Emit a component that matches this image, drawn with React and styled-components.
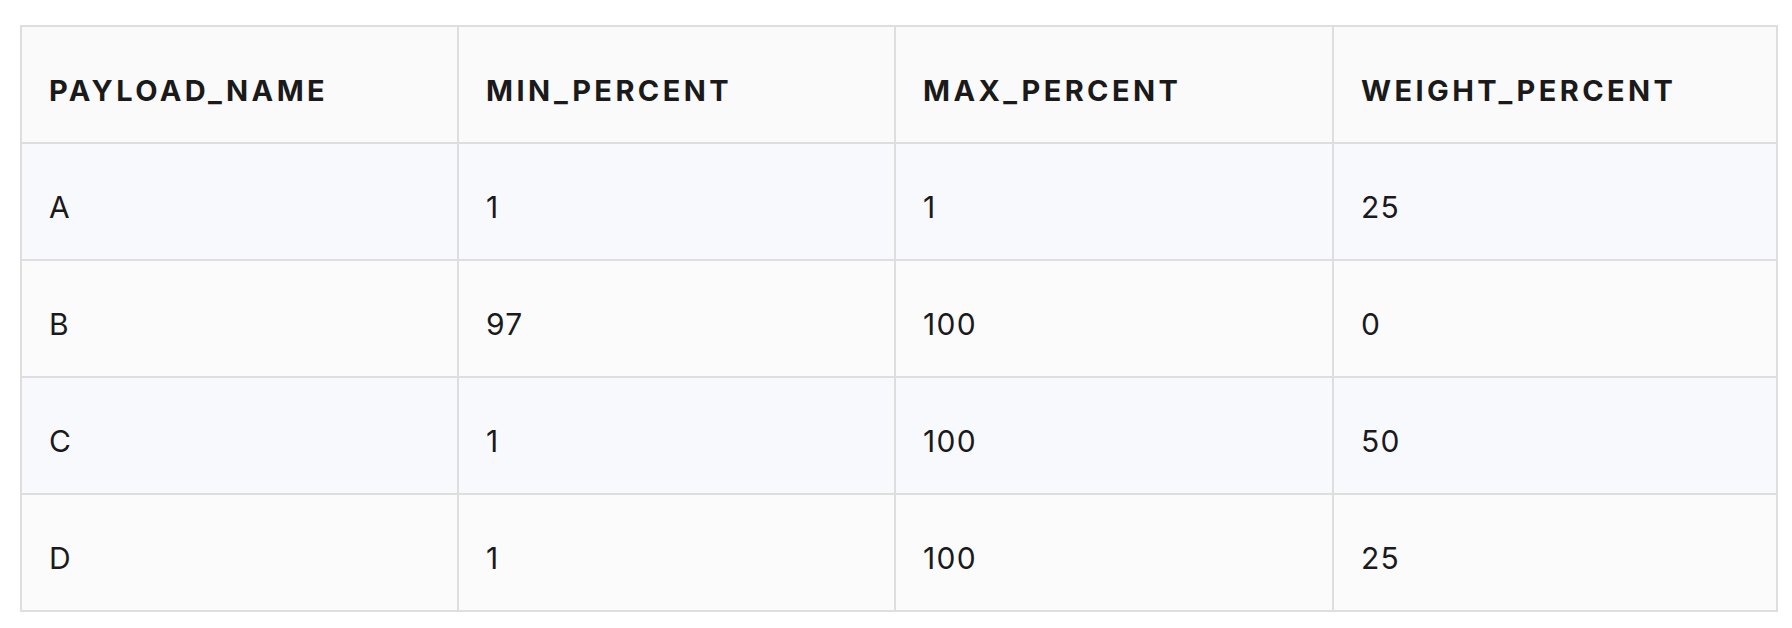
import React from "react";
import styled, { createGlobalStyle } from "styled-components";

const GlobalStyle = createGlobalStyle`
  html, body {
    margin: 0;
    background: #ffffff;
    font-family: Inter, "Noto Sans", sans-serif;
    color: #1c1c1e;
  }
`;

const Wrapper = styled.div`
  padding: 25px 0 0 20px;
`;

const Table = styled.table`
  width: 1756px;
  table-layout: fixed;
  border-collapse: collapse;
  border: 2px solid #dedede;
`;

const HeadCell = styled.th`
  text-align: left;
  background: #fafafa;
  border: 2px solid #dedede;
  padding: 46px 20px 33px 27px;
  font-size: 29px;
  line-height: 36px;
  font-weight: 700;
  letter-spacing: 3.4px;
  color: #1a1a1a;
`;

const Row = styled.tr`
  background: ${({ $striped }) => ($striped ? "#f8f9fc" : "#fbfbfb")};
`;

const Cell = styled.td`
  border: 2px solid #dedede;
  padding: 45px 20px 34px 27px;
  font-size: 30px;
  line-height: 36px;
  font-weight: 400;
  letter-spacing: 1.3px;
  color: #1a1a1c;
`;

const columns = ["PAYLOAD_NAME", "MIN_PERCENT", "MAX_PERCENT", "WEIGHT_PERCENT"];
const widths = [437, 437, 438, 444];

const rows = [
  ["A", "1", "1", "25"],
  ["B", "97", "100", "0"],
  ["C", "1", "100", "50"],
  ["D", "1", "100", "25"],
];

export default function App() {
  return (
    <>
      <GlobalStyle />
      <Wrapper>
        <Table>
          <colgroup>
            {widths.map((w, i) => (
              <col key={i} style={{ width: w }} />
            ))}
          </colgroup>
          <thead>
            <tr>
              {columns.map((c) => (
                <HeadCell key={c}>{c}</HeadCell>
              ))}
            </tr>
          </thead>
          <tbody>
            {rows.map((r, i) => (
              <Row key={i} $striped={i % 2 === 0}>
                {r.map((v, j) => (
                  <Cell key={j}>{v}</Cell>
                ))}
              </Row>
            ))}
          </tbody>
        </Table>
      </Wrapper>
    </>
  );
}
